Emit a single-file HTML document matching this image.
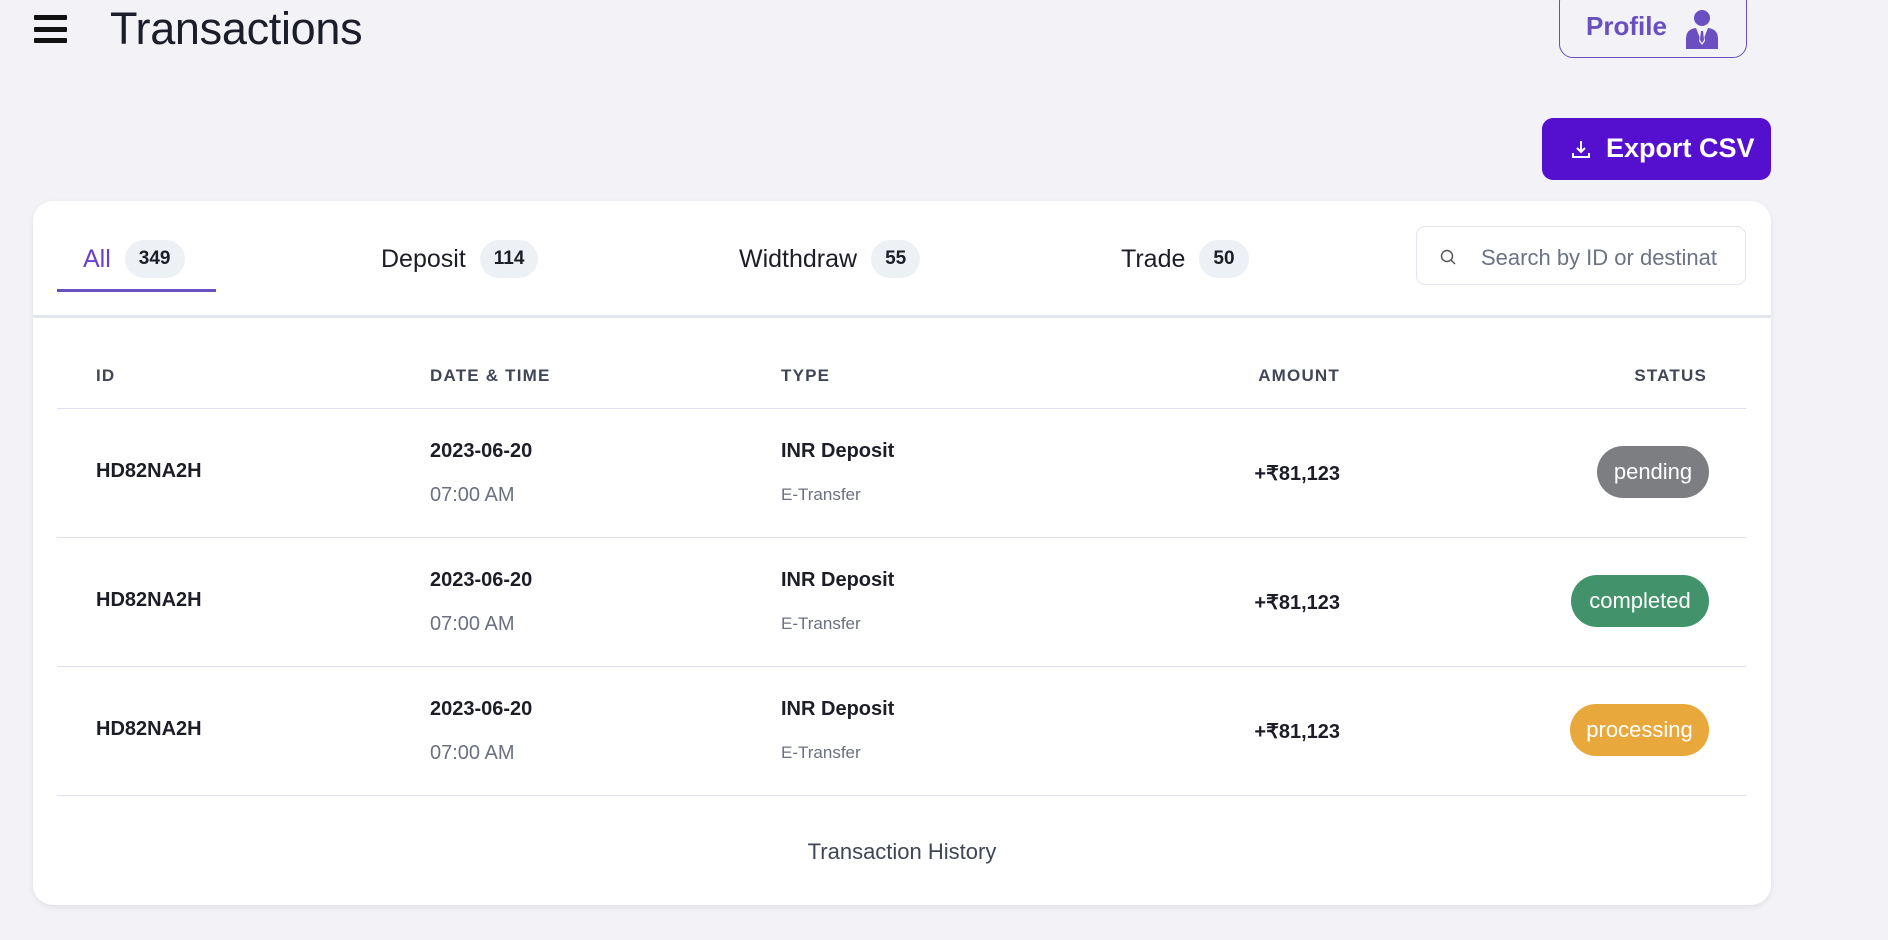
<!DOCTYPE html>
<html><head><meta charset="utf-8"><style>
*{box-sizing:border-box;margin:0;padding:0}
body{width:1888px;height:940px;background:#f2f2f7;font-family:"Liberation Sans",sans-serif;position:relative;overflow:hidden;color:#1c1d27}
.abs{position:absolute}
.ham div{position:absolute;left:34px;width:33px;height:5px;background:#111;border-radius:1px}
h1{position:absolute;left:110px;top:3px;font-size:45px;font-weight:400;color:#1b1d2b;letter-spacing:-0.3px}
.profile{left:1559px;top:-12px;width:188px;height:70px;border:1.5px solid #6a4fc0;border-radius:14px;color:#6a4fc0;font-weight:700;font-size:26px}
.export{left:1542px;top:118px;width:229px;height:62px;background:#5510cf;border-radius:11px;color:#fff;font-weight:700;font-size:27px}
.card{left:33px;top:201px;width:1738px;height:704px;background:#fff;border-radius:20px;box-shadow:0 2px 6px rgba(0,0,0,.08)}
.tab{position:absolute;top:240px;font-size:25px;color:#1c1d27;display:flex;align-items:center;height:38px}
.badge{display:inline-block;background:#edf0f5;border-radius:19px;height:38px;line-height:38px;padding:0 14px;font-size:19px;font-weight:700;margin-left:14px;color:#1c1d27}
.th{position:absolute;top:366px;font-size:17px;font-weight:700;letter-spacing:1.2px;color:#404656}
.line{position:absolute;left:57px;width:1689px;height:1px;background:#e3ddf3}
.cell{position:absolute;font-size:20px;font-weight:700;color:#1c1d27}
.sub{position:absolute;font-size:20px;color:#6b7080}
.sub2{position:absolute;font-size:17px;color:#6b7080}
.pill{position:absolute;height:52px;border-radius:26px;color:#fff;font-size:22px;line-height:52px;text-align:center}
</style></head><body>
<div class="ham"><div style="top:15px"></div><div style="top:27px"></div><div style="top:38px"></div></div>
<h1>Transactions</h1>
<div class="abs profile"><span style="position:absolute;left:26px;top:22px">Profile</span>
<svg style="position:absolute;left:124px;top:20px" width="36" height="40" viewBox="0 0 36 40"><circle cx="18" cy="9" r="8" fill="#6a4fc0"/><path d="M2 40 V30 Q2 20 12 19 L18 34 L24 19 Q34 20 34 30 V40Z" fill="#6a4fc0"/><path d="M15.5 19 h5 l-1 3 l1.5 10 l-3 4 l-3-4 l1.5-10z" fill="#f2f2f7"/><path d="M17 22h2l1 9l-2 3l-2-3z" fill="#6a4fc0"/></svg></div>
<div class="abs export"><svg style="position:absolute;left:29px;top:21px" width="20" height="20" viewBox="0 0 20 20" fill="none" stroke="#fff" stroke-width="2"><path d="M10 2v11M6 9l4 4 4-4M2 14v4h16v-4"/></svg><span style="position:absolute;left:64px;top:15px">Export CSV</span></div>
<div class="abs card"></div>
<div class="tab" style="left:83px;color:#6a3fcc">All<span class="badge">349</span></div>
<div class="abs" style="left:57px;top:289px;width:159px;height:3px;background:#6a4fc0"></div>
<div class="tab" style="left:381px">Deposit<span class="badge">114</span></div>
<div class="tab" style="left:739px">Widthdraw<span class="badge">55</span></div>
<div class="tab" style="left:1121px">Trade<span class="badge">50</span></div>
<div class="abs" style="left:1416px;top:226px;width:330px;height:59px;border:1px solid #e2e6ee;border-radius:9px"></div>
<svg class="abs" style="left:1439px;top:248px" width="18" height="18" viewBox="0 0 18 18" fill="none" stroke="#555" stroke-width="1.5"><circle cx="8" cy="8" r="5.5"/><path d="M12 12l4 4"/></svg>
<div class="abs" style="left:1481px;top:245px;font-size:22px;color:#6b7384">Search by ID or destinat</div>
<div class="abs" style="left:33px;top:315px;width:1738px;height:3px;background:#e3e5ef"></div>
<div class="th" style="left:96px">ID</div>
<div class="th" style="left:430px">DATE &amp; TIME</div>
<div class="th" style="left:781px">TYPE</div>
<div class="th" style="left:1250px;width:90px;text-align:right">AMOUNT</div>
<div class="th" style="left:1607px;width:100px;text-align:right">STATUS</div>
<div class="line" style="top:408px"></div>
<div class="line" style="top:537px"></div>
<div class="line" style="top:666px"></div>
<div class="line" style="top:795px"></div>

<div class="cell" style="left:96px;top:460px">HD82NA2H</div>
<div class="cell" style="left:430px;top:440px">2023-06-20</div>
<div class="sub" style="left:430px;top:484px">07:00 AM</div>
<div class="cell" style="left:781px;top:440px">INR Deposit</div>
<div class="sub2" style="left:781px;top:485px">E-Transfer</div>
<div class="cell" style="left:1200px;width:140px;text-align:right;top:461px">+₹81,123</div>
<div class="pill" style="left:1597px;top:446px;width:112px;background:#7c7e81">pending</div>

<div class="cell" style="left:96px;top:589px">HD82NA2H</div>
<div class="cell" style="left:430px;top:569px">2023-06-20</div>
<div class="sub" style="left:430px;top:613px">07:00 AM</div>
<div class="cell" style="left:781px;top:569px">INR Deposit</div>
<div class="sub2" style="left:781px;top:614px">E-Transfer</div>
<div class="cell" style="left:1200px;width:140px;text-align:right;top:590px">+₹81,123</div>
<div class="pill" style="left:1571px;top:575px;width:138px;background:#42936c">completed</div>

<div class="cell" style="left:96px;top:718px">HD82NA2H</div>
<div class="cell" style="left:430px;top:698px">2023-06-20</div>
<div class="sub" style="left:430px;top:742px">07:00 AM</div>
<div class="cell" style="left:781px;top:698px">INR Deposit</div>
<div class="sub2" style="left:781px;top:743px">E-Transfer</div>
<div class="cell" style="left:1200px;width:140px;text-align:right;top:719px">+₹81,123</div>
<div class="pill" style="left:1570px;top:704px;width:139px;background:#e8a83b">processing</div>

<div class="abs" style="left:702px;top:839px;width:400px;text-align:center;font-size:22px;color:#404656">Transaction History</div>
</body></html>
